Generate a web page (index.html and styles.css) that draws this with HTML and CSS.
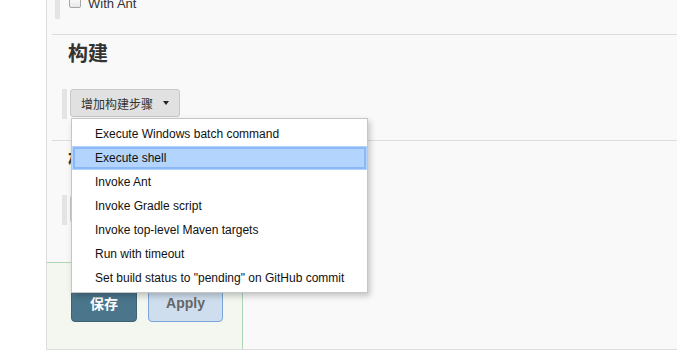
FILE: index.html
```html
<!DOCTYPE html>
<html lang="zh-CN">
<head>
    <meta charset="UTF-8">
    <meta name="viewport" content="width=device-width, initial-scale=1.0">
    <title>配置</title>
    <link rel="stylesheet" href="styles.css">
</head>
<body>
    <div class="page">
        <div class="opt-row">
            <span class="checkbox"></span>
            <span class="opt-label">With Ant</span>
        </div>

        <div class="divider"></div>
        <h2 class="section-title">构建</h2>
        <div class="step-row">
            <div class="dropdown">
                <button class="add-btn">增加构建步骤 <span class="caret"></span></button>
                <ul class="menu">
                    <li>Execute Windows batch command</li>
                    <li class="active">Execute shell</li>
                    <li>Invoke Ant</li>
                    <li>Invoke Gradle script</li>
                    <li>Invoke top-level Maven targets</li>
                    <li>Run with timeout</li>
                    <li>Set build status to "pending" on GitHub commit</li>
                </ul>
            </div>
        </div>

        <div class="divider second"></div>
        <h2 class="section-title">构建后操作</h2>
        <div class="step-row">
            <button class="add-btn">增加构建后操作步骤 <span class="caret"></span></button>
        </div>

        <div class="bottom-bar">
            <button class="save-btn">保存</button>
            <button class="apply-btn">Apply</button>
        </div>
    </div>
</body>
</html>
```

FILE: styles.css
```css
body {
    margin: 0;
    background-color: #fff;
    font-family: "Liberation Sans", Arial, "Noto Sans CJK SC", sans-serif;
    color: #333;
    overflow: hidden;
}
.page {
    margin-left: 46px;
    height: 349px;
    border-left: 1px solid #ddd;
    border-bottom: 1px solid #ddd;
    background-color: #f9f9f9;
    display: flex;
    flex-direction: column;
    overflow: hidden;
}
.opt-row {
    margin: -10px 0 0 8px;
    padding: 6px 0 7px 9px;
    border-left: 5px solid #e4e4e4;
    display: flex;
    align-items: flex-start;
    gap: 7px;
}
.checkbox {
    width: 10px;
    height: 10px;
    border: 1px solid #a6a6a6;
    border-radius: 2px;
    background: linear-gradient(#fdfdfd, #e9e9e9);
}
.opt-label {
    font-size: 13px;
    line-height: 16px;
}
.divider {
    margin: 15px 0 0 5px;
    border-top: 1px solid #ddd;
}
.divider.second {
    margin-top: 21px;
}
.section-title {
    margin: 6px 0 0 21px;
    font-family: "Noto Sans CJK SC", sans-serif;
    font-size: 20px;
    line-height: 24px;
    font-weight: bold;
    color: #333;
}
.step-row {
    margin: 24px 0 0 15px;
    height: 30px;
    padding-left: 3px;
    border-left: 5px solid #e4e4e4;
    display: flex;
    align-items: flex-start;
}
.dropdown {
    position: relative;
}
.add-btn {
    height: 28px;
    padding: 0 10px;
    border: 1px solid #c8c8c8;
    border-radius: 3px;
    background-color: #e1e1e1;
    color: #333;
    font-family: "Noto Sans CJK SC", sans-serif;
    font-size: 12px;
    display: flex;
    align-items: center;
    gap: 10px;
}
.caret {
    width: 0;
    height: 0;
    border-top: 4px solid #222;
    border-left: 3px solid transparent;
    border-right: 3px solid transparent;
}
.menu {
    position: absolute;
    left: 1px;
    top: 29px;
    z-index: 10;
    width: 295px;
    margin: 0;
    padding: 3px 0 2px;
    list-style: none;
    background-color: #fff;
    border: 1px solid #c6c6c6;
    box-shadow: 2px 3px 6px rgba(0, 0, 0, 0.22);
}
.menu li {
    height: 24px;
    line-height: 24px;
    padding-left: 23px;
    font-size: 12px;
    color: #111;
    white-space: nowrap;
}
.menu li.active {
    background-color: #b3d4fc;
    box-shadow: inset 0 0 0 1px #b3d4fc, inset 0 0 0 3px #8cb8f6;
}
.bottom-bar {
    margin-top: auto;
    width: 171px;
    height: 65px;
    padding: 21px 0 0 24px;
    border: 1px solid #acd5b9;
    border-bottom: none;
    border-left: none;
    background-color: #f3f7f0;
    display: flex;
    align-items: flex-start;
    gap: 11px;
}
.save-btn {
    width: 66px;
    height: 38px;
    border: 1px solid #3b6275;
    border-radius: 4px;
    background-color: #4b758b;
    color: #fff;
    font-family: "Noto Sans CJK SC", sans-serif;
    font-size: 14px;
    font-weight: bold;
}
.apply-btn {
    width: 75px;
    height: 38px;
    border: 1px solid #7aa6dc;
    border-radius: 4px;
    background-color: #cfdeee;
    color: #666;
    font-family: "Liberation Sans", Arial, sans-serif;
    font-size: 14px;
    font-weight: bold;
}
```
